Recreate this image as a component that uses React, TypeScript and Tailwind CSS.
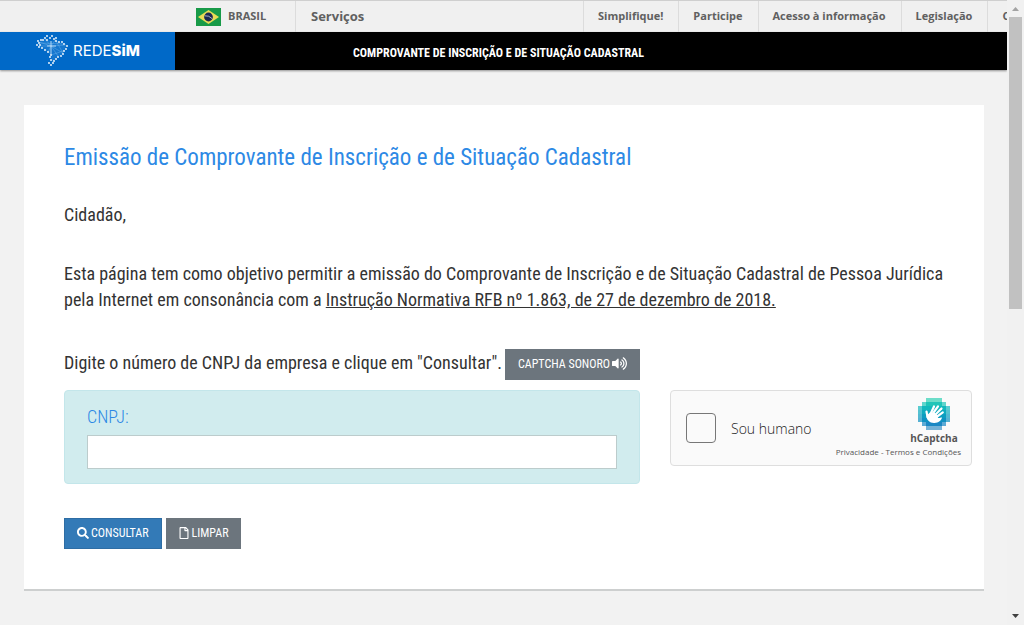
import React from "react";
import { FaSearch, FaRegFile, FaVolumeUp } from "react-icons/fa";

const condensed = "font-['Roboto_Condensed',Roboto,sans-serif]";

const govLinks = ["Simplifique!", "Participe", "Acesso à informação", "Legislação", "Canais"];

function BrazilFlag() {
  return (
    <svg width="25" height="18" viewBox="0 0 25 18" aria-hidden="true">
      <rect width="25" height="18" fill="#189a48" />
      <path d="M12.500 2 L23 9 L12.500 16 L2 9 Z" fill="#e9dc55" />
      <circle cx="12.500" cy="9" r="4.400" fill="#1d2a52" />
      <path d="M8.600 7.800 Q13 7.200 16.300 10.800" stroke="#c8ccdc" strokeWidth="0.800" fill="none" />
    </svg>
  );
}

const mapDots: [number, number][] = [
  [9, 4], [11, 2], [14, 4], [11, 6], [16, 2], [18, 5], [20, 4], [20, 7], [23, 8], [26, 8], [28, 10], [31, 12],
  [30, 15], [28, 17], [27, 20], [25, 22], [22, 23], [20, 25], [18, 27], [17, 29], [15, 31], [13, 29], [15, 26],
  [14, 23], [15, 21], [12, 18], [9, 16], [6, 14], [3, 13], [1, 11], [3, 9], [2, 7], [5, 6], [7, 6], [4, 11],
];

function BrazilMap() {
  return (
    <svg width="33" height="34" viewBox="0 0 33 34" aria-hidden="true">
      <path
        d="M3 8 L9 5 L15 7 L20 6 L30 12 L27 20 L20 24 L16 29 L15 21 L4 12 Z"
        fill="#2f8ad8"
        fillOpacity="0.450"
      />
      <path
        d="M15 12 L3 8 M15 12 L3 12 M15 12 L9 5 M15 12 L20 5 M15 12 L30 11 M15 12 L27 19 M15 12 L22 22 M15 12 L12 18 M4 9 L28 10 M20 7 L27 19 M15 21 L27 17"
        stroke="#7ab8ec"
        strokeWidth="0.400"
        fill="none"
      />
      <path d="M15 7 V20 M11 12 H20" stroke="#c4e2fb" strokeWidth="0.900" />
      {mapDots.map(([x, y]) => (
        <circle key={`${x}-${y}`} cx={x} cy={y} r="0.900" fill="#fff" />
      ))}
    </svg>
  );
}

const discRows = [
  [2, 6, "#2fd0b4"],
  [1, 7, "#1fc5b8"],
  [0, 8, "#14b8bd"],
  [0, 8, "#0eaabf"],
  [0, 8, "#0c9dc0"],
  [0, 8, "#0f92c2"],
  [1, 7, "#1a88c4"],
  [2, 6, "#3a93c8"],
] as const;

function CaptchaLogo() {
  return (
    <svg width="32" height="32" viewBox="0 0 32 32" aria-hidden="true">
      {discRows.map(([from, to, fill], row) =>
        Array.from({ length: to - from }, (_, i) => {
          const col = from + i;
          const edge = col === from || col === to - 1 || row === 0 || row === 7;
          return (
            <rect key={`${row}-${col}`} x={col * 4} y={row * 4} width="4" height="4" fill={fill} fillOpacity={edge ? 0.7 : 1} />
          );
        }),
      )}
      <g stroke="#fff" strokeLinecap="round" strokeWidth="2.200">
        <path d="M12.500 16 L16 8.500" />
        <path d="M14.500 16 L20 8.300" />
        <path d="M16.500 17.500 L23.500 10.500" />
        <path d="M18.500 19 L24.800 14.300" />
        <path d="M9.500 19 L8.500 13.500" />
      </g>
      <path
        d="M8.500 17.500 L12 14.500 L17 15 L20 17.800 L19.800 20 C21.500 20.200 22.500 19.500 24 19.500 C23.500 22.500 20.500 24.800 16.500 25 C12 25.300 8.200 22 8.500 17.500 Z"
        fill="#fff"
      />
    </svg>
  );
}

function GovBar() {
  return (
    <nav className="flex h-8 overflow-hidden border-t border-[#cfcfcf] bg-[#f0f0f0] font-['Open_Sans','Noto_Sans',sans-serif] text-[11px] font-bold text-[#606060]">
      <a href="#brasil" className="ml-[196px] flex w-[100px] shrink-0 items-center gap-[7px] border-r border-[#dcdcdc]">
        <BrazilFlag />
        BRASIL
      </a>
      <a href="#servicos" className="flex flex-1 items-center pl-[15px] text-[13px]">
        Serviços
      </a>
      <ul className="flex w-[424px] shrink-0 overflow-hidden">
        {govLinks.map((label) => (
          <li key={label} className="flex shrink-0 border-l border-[#dcdcdc]">
            <a href={`#${label}`} className="flex items-center pb-px pl-3.5 pr-[15px]">
              {label}
            </a>
          </li>
        ))}
      </ul>
    </nav>
  );
}

function Header() {
  return (
    <header className="flex h-[38px] bg-black text-white shadow-[0_1px_2px_rgba(0,0,0,0.4)]">
      <a href="#inicio" className="flex w-[175px] shrink-0 items-center gap-1 bg-[#0069c8] pl-9">
        <BrazilMap />
        <span className="font-[Inter,sans-serif] text-[15px] leading-4">
          REDE<b className="font-extrabold">SiM</b>
        </span>
      </a>
      <div className={`${condensed} flex items-center pl-[178px] pt-1 text-xs font-bold`}>
        COMPROVANTE DE INSCRIÇÃO E DE SITUAÇÃO CADASTRAL
      </div>
    </header>
  );
}

function Captcha() {
  return (
    <div className="flex h-[76px] w-[302px] shrink-0 items-center justify-between rounded border border-[#dedede] bg-[#fafafa] pl-[15px] pr-2.5 font-['Open_Sans','Noto_Sans',sans-serif] text-[#555]">
      <label className="flex items-center gap-[15px] text-sm font-light text-[#222]">
        <input type="checkbox" className="size-[30px] appearance-none rounded border border-[#777] bg-[#fafafa]" />
        <span className="pt-0.5">Sou humano</span>
      </label>
      <div className="flex flex-col items-end">
        <div className="flex w-[54px] flex-col items-center">
          <CaptchaLogo />
          <span className="text-[10px] font-bold leading-4">hCaptcha</span>
        </div>
        <div className="text-[8px] leading-3">
          <a href="#privacidade">Privacidade</a> - <a href="#termos">Termos e Condições</a>
        </div>
      </div>
    </div>
  );
}

function Scrollbar() {
  return (
    <div className="flex w-[17px] shrink-0 flex-col items-center justify-between bg-[#f1f1f1]" aria-hidden="true">
      <div className="flex w-full flex-1 flex-col items-center">
        <svg width="17" height="17" viewBox="0 0 17 17">
          <path d="M5 11 L8.500 7 L12 11 Z" fill="#a3a3a3" />
        </svg>
        <div className="h-[48%] w-[13px] bg-[#c1c1c1]" />
      </div>
      <svg width="17" height="17" viewBox="0 0 17 17">
        <path d="M5 6 L8.500 10 L12 6 Z" fill="#404040" />
      </svg>
    </div>
  );
}

export default function App() {
  return (
    <div className="flex h-screen bg-[#f2f2f2]">
      <div className="min-w-0 flex-1 overflow-hidden">
        <GovBar />
        <Header />
        <main className={`${condensed} ml-6 mr-[23px] mt-[35px] border-b-2 border-[#cdcfcf] bg-white px-10 pb-10 pt-9 text-lg leading-[26px] text-[#333]`}>
          <h1 className="text-[23px] leading-[34px] text-[#2d89e5]">Emissão de Comprovante de Inscrição e de Situação Cadastral</h1>
          <p className="mt-[27px]">Cidadão,</p>
          <p className="mt-[33px]">
            Esta página tem como objetivo permitir a emissão do Comprovante de Inscrição e de Situação Cadastral de Pessoa Jurídica pela
            Internet em consonância com a{" "}
            <a href="#instrucao" className="underline">
              Instrução Normativa RFB nº 1.863, de 27 de dezembro de 2018.
            </a>
          </p>
          <form>
            <div className="mt-9 flex items-center gap-[3px]">
              <p className="pb-1">Digite o número de CNPJ da empresa e clique em "Consultar".</p>
              <button type="button" className="flex h-[31px] items-center gap-0.5 bg-[#6c757d] px-[13px] pb-0.5 text-xs text-white">
                CAPTCHA SONORO
                <FaVolumeUp size={15} />
              </button>
            </div>
            <div className="-mr-7 mt-2.5 flex gap-[30px]">
              <div className="h-[94px] flex-1 rounded border border-[#c3e6ea] bg-[#d1ecee] px-[22px] pt-3">
                <label htmlFor="cnpj" className="block font-light leading-7 text-[#2d89e5]">
                  CNPJ:
                </label>
                <input id="cnpj" className="mt-1 block h-[34px] w-full border border-[#bccccc] bg-white px-3" />
              </div>
              <Captcha />
            </div>
            <div className="mt-[34px] flex gap-1">
              <button type="button" className="flex h-[31px] items-center gap-0.5 border border-[#2e6da4] bg-[#337ab7] px-3 pb-0.5 text-xs text-white">
                <FaSearch size={12} />
                CONSULTAR
              </button>
              <button type="reset" className="flex h-[31px] items-center gap-0.5 bg-[#6c757d] px-3 pb-0.5 text-xs text-white">
                <FaRegFile size={12} />
                LIMPAR
              </button>
            </div>
          </form>
        </main>
      </div>
      <Scrollbar />
    </div>
  );
}
